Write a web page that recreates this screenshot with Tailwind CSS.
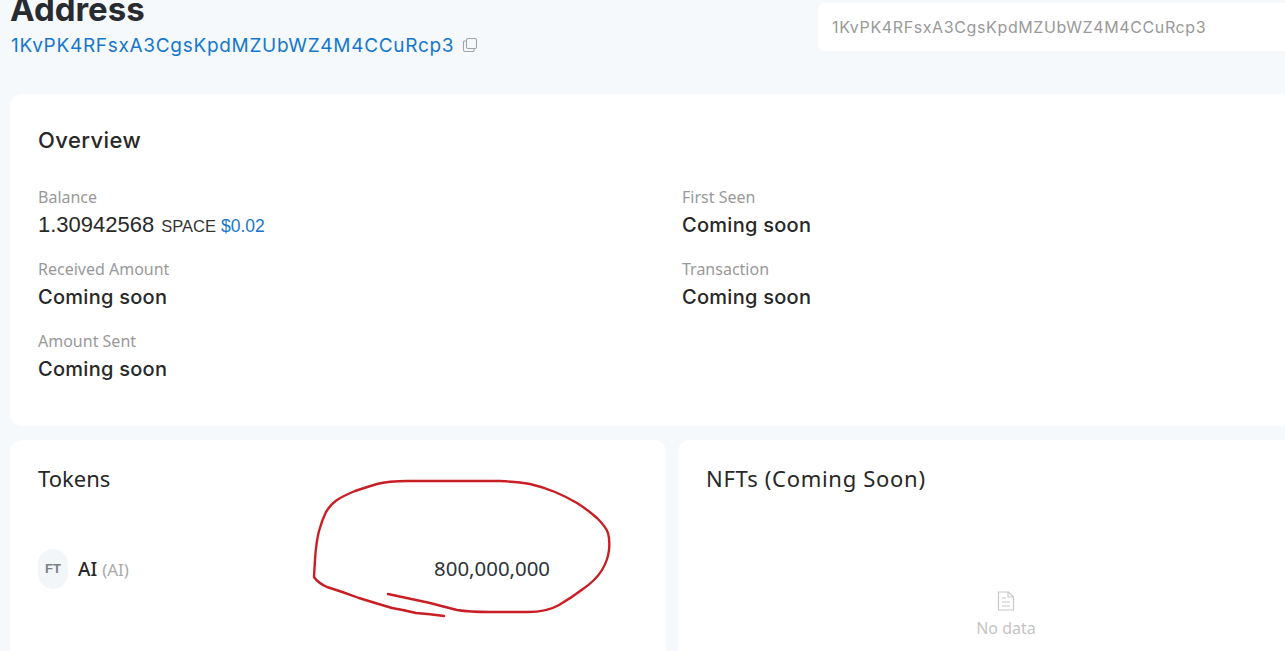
<!doctype html>
<html>
<head>
<meta charset="utf-8">
<script src="https://cdn.jsdelivr.net/npm/@tailwindcss/browser@4"></script>
</head>
<body class="bg-[#f5f9fc]">
<div class="relative h-[651px] w-[1285px] overflow-hidden bg-[#f5f9fc] font-['Noto_Sans',sans-serif] text-[#282828]">
  <header class="-mt-[11px] flex items-start justify-between pl-[10px]">
    <div>
      <h1 class="font-['Inter',sans-serif] text-[33px] leading-[40px] font-bold text-[#282c30]">Address</h1>
      <div class="mt-[1px] flex items-center gap-[8px] pl-[1px]">
        <a class="font-['Inter',sans-serif] text-[19px] leading-[32px] font-normal tracking-[0.7px] text-[#1677cc]">1KvPK4RFsxA3CgsKpdMZUbWZ4M4CCuRcp3</a>
        <svg class="-mt-[3px] h-[16px] w-[16px] text-[#a3a3a3]" viewBox="0 0 16 16" fill="none" stroke="currentColor" stroke-width="1.1">
          <rect x="4.5" y="1.5" width="10" height="10" rx="1.5"/>
          <path d="M4 4H2.5A1 1 0 0 0 1.5 5v8A1.5 1.5 0 0 0 3 14.500h8a1 1 0 0 0 1-1V12"/>
        </svg>
      </div>
    </div>
    <div class="mt-[14px] flex h-[48px] w-[467px] items-center rounded-l-[6px] bg-white pl-[14px] font-['Inter',sans-serif] text-[16px] tracking-[0.62px] text-[#999]">1KvPK4RFsxA3CgsKpdMZUbWZ4M4CCuRcp3</div>
  </header>

  <section class="mt-[32px] ml-[10px] h-[332px] rounded-l-[12px] bg-white pt-[31px] pl-[28px]">
    <h2 class="font-['Inter',sans-serif] text-[22px] leading-[30px] font-[450] tracking-[0.4px]">Overview</h2>
    <div class="mt-[31px] grid grid-cols-[644px_1fr] gap-y-[16px]">
      <div>
        <div class="text-[16px] leading-[22px] text-[#999]">Balance</div>
        <div class="flex h-[34px] items-baseline font-['Liberation_Sans',sans-serif]">
          <span class="text-[22px]">1.30942568</span>
          <span class="ml-[7px] text-[16.500px] font-medium text-[#333]">SPACE</span>
          <span class="ml-[5px] text-[17.500px] font-medium text-[#1677cc]">$0.02</span>
        </div>
      </div>
      <div>
        <div class="text-[16px] leading-[22px] text-[#999]">First Seen</div>
        <div class="h-[34px] font-['Inter',sans-serif] text-[20px] leading-[34px] font-medium tracking-[0.27px]">Coming soon</div>
      </div>
      <div>
        <div class="text-[16px] leading-[22px] text-[#999]">Received Amount</div>
        <div class="h-[34px] font-['Inter',sans-serif] text-[20px] leading-[34px] font-medium tracking-[0.27px]">Coming soon</div>
      </div>
      <div>
        <div class="text-[16px] leading-[22px] text-[#999]">Transaction</div>
        <div class="h-[34px] font-['Inter',sans-serif] text-[20px] leading-[34px] font-medium tracking-[0.27px]">Coming soon</div>
      </div>
      <div>
        <div class="text-[16px] leading-[22px] text-[#999]">Amount Sent</div>
        <div class="h-[34px] font-['Inter',sans-serif] text-[20px] leading-[34px] font-medium tracking-[0.27px]">Coming soon</div>
      </div>
    </div>
  </section>

  <div class="mt-[14px] ml-[10px] grid grid-cols-[656px_1fr] gap-[12px]">
    <section class="h-[260px] rounded-[12px] bg-white pt-[23px] pr-[116px] pl-[28px]">
      <h2 class="text-[22px] leading-[30px] font-normal">Tokens</h2>
      <div class="mt-[56px] flex items-center justify-between">
        <div class="flex items-center gap-[10px]">
          <div class="flex h-[40px] w-[30px] items-center justify-center rounded-full bg-[#f3f6f9] font-['Liberation_Sans',sans-serif] text-[13px] font-bold text-[#7b8087]">FT</div>
          <div class="text-[19px]"><span class="font-medium">AI</span> <span class="text-[17px] text-[#aaa]">(AI)</span></div>
        </div>
        <div class="-mt-[2px] text-[20.400px] text-[#2f3338]">800,000,000</div>
      </div>
    </section>
    <section class="h-[260px] rounded-l-[12px] bg-white pt-[23px] pl-[28px]">
      <h2 class="text-[22px] leading-[30px] font-normal tracking-[0.7px]">NFTs (Coming Soon)</h2>
      <div class="mt-[98px] flex w-[600px] flex-col items-center">
        <svg class="h-[20px] w-[18px] text-[#c8c8c8]" viewBox="0 0 18 20" fill="none" stroke="currentColor" stroke-width="1.2">
          <path d="M1.500 1h10l5 5v13h-15z"/>
          <path d="M11 1v5h5.500M5 7h4M5 11h8M5 15h8"/>
        </svg>
        <div class="mt-[5px] text-[16px] leading-[24px] text-[#c4c4c4]">No data</div>
      </div>
    </section>
  </div>

  <svg class="pointer-events-none absolute top-0 left-0 h-[651px] w-[1285px]" viewBox="0 0 1285 651" fill="none">
    <path stroke="#c81e24" stroke-width="2.4" stroke-linecap="round" d="M388 594 Q416 600 430 603 Q445 607 457 610 Q469 612 490 612 Q510 612 528 612 Q547 612 559 605 Q571 598 583 589 Q596 580 602 570 Q608 560 609 550 Q610 540 608 533 Q606 527 597 518 Q588 510 577 503 Q567 497 555 492 Q543 487 530 484 Q518 482 500 481 Q482 481 455 481 Q429 481 408 481 Q388 481 377 484 Q367 487 355 491 Q343 496 337 500 Q331 504 326 512 Q322 520 319 531 Q316 543 315 560 L314 577 Q318 583 327 587 Q343 592 359 598 Q375 603 392 608 Q404 610 416 613 Q430 614 444 616"/>
  </svg>
</div>
</body>
</html>
